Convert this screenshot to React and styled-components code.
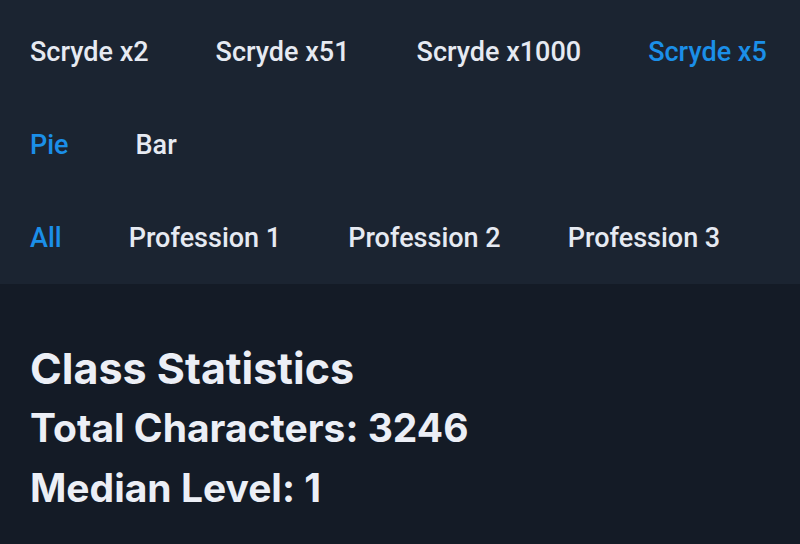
import React from "react";
import styled, { createGlobalStyle } from "styled-components";

const GlobalStyle = createGlobalStyle`
  html, body {
    margin: 0;
    padding: 0;
    background: #141b26;
  }
`;

const servers = ["Scryde x2", "Scryde x51", "Scryde x1000", "Scryde x5"];
const charts = ["Pie", "Bar"];
const professions = ["All", "Profession 1", "Profession 2", "Profession 3"];

export default class App extends React.Component {
  constructor(props) {
    super(props);
    this.state = {
      server: "Scryde x5",
      chart: "Pie",
      profession: "All",
    };
  }

  renderTabs(items, key) {
    return (
      <TabRow>
        {items.map((item) => (
          <Tab
            key={item}
            $active={this.state[key] === item}
            onClick={() => this.setState({ [key]: item })}
          >
            {item}
          </Tab>
        ))}
      </TabRow>
    );
  }

  render() {
    return (
      <Page>
        <GlobalStyle />
        <Header>
          {this.renderTabs(servers, "server")}
          {this.renderTabs(charts, "chart")}
          {this.renderTabs(professions, "profession")}
        </Header>
        <Stats>
          <Title>Class Statistics</Title>
          <StatLine>Total Characters: 3246</StatLine>
          <StatLine>Median Level: 1</StatLine>
        </Stats>
      </Page>
    );
  }
}

const Page = styled.div`
  width: 800px;
  height: 544px;
  background: #141b26;
  overflow: hidden;
`;
const Header = styled.div`
  background: #1b2431;
  height: 284px;
  padding: 6px 0 0 30px;
  box-sizing: border-box;
  display: flex;
  flex-direction: column;
`;
const TabRow = styled.div`
  display: flex;
  gap: 67px;
  height: 94px;
  align-items: center;
`;
const Tab = styled.button`
  background: none;
  border: none;
  padding: 0;
  cursor: pointer;
  font-family: Roboto, "Noto Sans", sans-serif;
  font-weight: 500;
  font-size: 27px;
  color: ${(p) => (p.$active ? "#1b8fe8" : "#e6eaf2")};
`;
const Stats = styled.div`
  padding: 54px 30px 0;
  display: flex;
  flex-direction: column;
  color: #eceff6;
  font-family: Inter, "Noto Sans", sans-serif;
  font-weight: 700;
`;
const Title = styled.h1`
  margin: 0;
  font-size: 43px;
  font-weight: 700;
  line-height: 60px;
`;
const StatLine = styled.div`
  font-size: 39px;
  line-height: 60px;
`;
